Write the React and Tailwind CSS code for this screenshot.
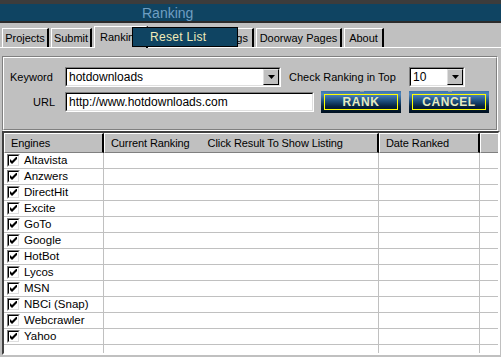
import React from "react";

const engines = [
  "Altavista",
  "Anzwers",
  "DirectHit",
  "Excite",
  "GoTo",
  "Google",
  "HotBot",
  "Lycos",
  "MSN",
  "NBCi (Snap)",
  "Webcrawler",
  "Yahoo",
];

function Sunken({ className = "", children }) {
  return (
    <div
      className={`border border-t-[#808080] border-l-[#808080] border-r-white border-b-white ${className}`}
    >
      <div className="w-full h-full border border-t-black border-l-black border-r-[#dfdfdf] border-b-[#dfdfdf] bg-white flex items-center">
        {children}
      </div>
    </div>
  );
}

function DropBtn() {
  return (
    <div className="w-[16px] h-[16px] bg-[#c0c0c0] border border-t-[#dfdfdf] border-l-[#dfdfdf] border-r-black border-b-black flex items-center justify-center shrink-0">
      <svg width="7" height="4" viewBox="0 0 7 4">
        <path d="M0 0 H7 L3.5 4 Z" fill="#000" />
      </svg>
    </div>
  );
}

function Check() {
  return (
    <div className="w-[13px] h-[13px] border border-t-[#808080] border-l-[#808080] border-r-white border-b-white shrink-0">
      <div className="w-full h-full border border-t-black border-l-black border-r-[#dfdfdf] border-b-[#dfdfdf] bg-white flex items-center justify-center">
        <svg width="7" height="7" viewBox="0 0 7 7">
          <path d="M0 2 L2 4 L7 -1 L7 2 L2 7 L0 5 Z" fill="#000" />
        </svg>
      </div>
    </div>
  );
}

function BlueButton({ label }) {
  return (
    <div className="relative w-[80px] h-[22px] bg-[linear-gradient(to_bottom,#3b73aa_0%,#4f86bd_15%,#1d4f7e_45%,#06233f_70%,#00101f_100%)] flex items-center justify-center">
      <div className="absolute left-[39px] top-0 w-[4px] h-[1px] bg-[#8aa0a0]" />
      <div className="absolute left-[3px] right-[3px] top-[3px] bottom-[3px] border border-[#ffff00]" />
      <span className="font-bold text-[12px] leading-none text-[#e4ebc2] tracking-[0.6px]">
        {label}
      </span>
    </div>
  );
}

function Tab({ label, w, active = false, className = "" }) {
  return (
    <div
      className={`relative ${w} bg-[#c0c0c0] border-t border-l border-t-white border-l-white border-r-2 border-r-black flex items-center justify-center ${
        active ? "h-[22px] -mb-[1px] z-10" : "h-[19px]"
      } ${className}`}
    >
      {label}
    </div>
  );
}

export default function App() {
  return (
    <div
      className="relative w-[501px] h-[357px] overflow-hidden bg-[#c0c0c0] text-black text-[11px] leading-none flex flex-col"
      style={{ fontFamily: '"Liberation Sans", Arial, sans-serif' }}
    >
      {/* Title bar */}
      <div className="h-[23px] shrink-0 border-t-[4px] border-t-[#3c3c3c] border-b-[2px] border-b-[#2b2b2b] bg-[#0f4462] flex items-center pl-[142px] pt-[1px]">
        <span className="text-[14px] text-[#6f9fc2]">Ranking</span>
      </div>

      {/* Tabs */}
      <div className="h-[24px] shrink-0 flex items-end gap-[2px] px-[2px]">
        <Tab label="Projects" w="w-[47px]" />
        <Tab label="Submit" w="w-[41px]" />
        <Tab label="Ranking" w="w-[54px]" active className="justify-start pl-[5px]" />
        <div className="w-[104px] h-[19px] bg-[#c0c0c0] border-t border-t-white border-r-2 border-r-black flex items-center justify-end pr-[4px]">
          <span className="whitespace-nowrap">ngs</span>
        </div>
        <Tab label="Doorway Pages" w="w-[86px]" />
        <Tab label="About" w="w-[40px]" />
      </div>

      {/* Reset List popup */}
      <div className="absolute left-[132px] top-[27px] w-[106px] h-[20px] bg-[#0f4462] border border-black z-20 flex items-center pl-[17px]">
        <span className="text-[12px] text-[#f2ebb8] tracking-[0.3px]">Reset List</span>
      </div>

      {/* Panel */}
      <div className="flex-1 flex flex-col border-t border-t-white px-[2px] pt-[8px]">
        {/* Group box */}
        <div className="h-[75px] w-[496px] shrink-0 border border-t-[#808080] border-l-[#808080] border-r-white border-b-white">
          <div className="h-full border border-t-white border-l-white border-r-[#808080] border-b-[#808080] flex flex-col pt-[9px] gap-[4px]">
            <div className="flex items-center h-[20px]">
              <span className="w-[61px] pl-[6px] shrink-0">Keyword</span>
              <Sunken className="w-[216px] h-[20px]">
                <span className="flex-1 pl-[2px] text-[12px]">hotdownloads</span>
                <DropBtn />
              </Sunken>
              <span className="ml-[8px] w-[120px] shrink-0">Check Ranking in Top</span>
              <Sunken className="w-[56px] h-[20px]">
                <span className="flex-1 pl-[2px] text-[12px]">10</span>
                <DropBtn />
              </Sunken>
            </div>
            <div className="flex items-center h-[22px]">
              <span className="w-[61px] pl-[29px] shrink-0">URL</span>
              <Sunken className="w-[249px] h-[20px]">
                <span className="flex-1 pl-[2px] text-[12px]">http://www.hotdownloads.com</span>
              </Sunken>
              <div className="ml-[7px]">
                <BlueButton label="RANK" />
              </div>
              <div className="ml-[8px]">
                <BlueButton label="CANCEL" />
              </div>
            </div>
          </div>
        </div>

        {/* Table */}
        <div className="w-[498px] h-[224px] shrink-0 border-2 border-t-[#404040] border-l-[#404040] border-r-white border-b-white">
          <div className="h-full bg-white overflow-hidden flex flex-col">
            <div className="h-[20px] shrink-0 flex bg-[#c0c0c0] text-[11px] tracking-[-0.1px]">
              <div className="w-[100px] h-full shrink-0 border-t border-l border-t-white border-l-white border-r-2 border-r-black border-b border-b-[#808080] flex items-center pl-[6px]">
                Engines
              </div>
              <div className="w-[275px] h-full shrink-0 border-t border-l border-t-white border-l-white border-r-2 border-r-black border-b border-b-[#808080] flex items-center pl-[6px] whitespace-nowrap">
                <span>Current Ranking</span>
                <span className="ml-[18px]">Click Result To Show Listing</span>
              </div>
              <div className="w-[101px] h-full shrink-0 border-t border-l border-t-white border-l-white border-r-2 border-r-black border-b border-b-[#808080] flex items-center pl-[6px]">
                Date Ranked
              </div>
              <div className="w-[18px] h-full shrink-0 border-t border-l border-t-white border-l-white border-b border-b-[#808080]" />
            </div>
            {engines.concat([""]).map((e, i) => (
              <div key={i} className="h-[16px] shrink-0 flex border-b border-b-[#c0c0c0]">
                <div className="w-[100px] shrink-0 border-r border-r-[#c0c0c0] flex items-center pl-[3px] gap-[4px]">
                  {e && <Check />}
                  {e && <span className="text-[11.5px]">{e}</span>}
                </div>
                <div className="w-[275px] shrink-0 border-r border-r-[#c0c0c0]" />
                <div className="w-[101px] shrink-0 border-r border-r-[#c0c0c0]" />
                <div className="w-[18px] shrink-0" />
              </div>
            ))}
          </div>
        </div>
      </div>
    </div>
  );
}
